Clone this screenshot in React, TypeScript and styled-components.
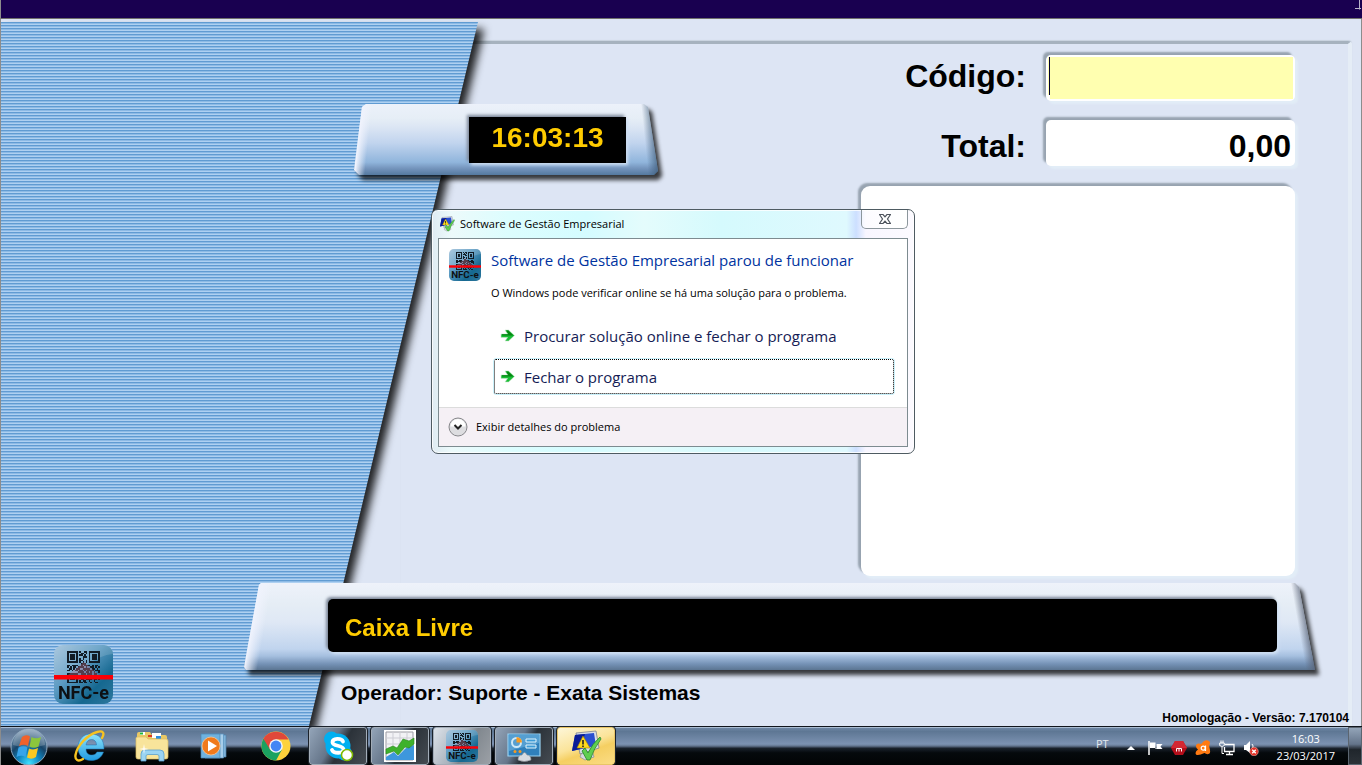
import React from 'react';
import styled, { createGlobalStyle } from 'styled-components';

const GlobalStyle = createGlobalStyle`
  *, *::before, *::after { box-sizing: border-box; }
  body { margin: 0; background: #dde5f4; }
  button, input { font: inherit; color: inherit; margin: 0; }
`;

const pos = `"Liberation Sans", Arial, sans-serif`;
const ui = `"Segoe UI", "Open Sans", sans-serif`;

const Screen = styled.div`
  min-height: 100vh;
  display: flex;
  flex-direction: column;
  font-family: ${pos};
  color: #000;
`;

const TopBar = styled.header`
  height: 19px;
  background: #190050;
  border-left: 1px solid #8c8c8c;
  border-bottom: 1px solid #70706c;
  display: flex;
  justify-content: flex-end;
`;

const Stage = styled.main`
  flex: 1;
  position: relative;
  display: grid;
  background: #dde5f4;
  border: 1px solid #8c8c8c;
  border-width: 0 1px;
`;

const Frame = styled.div`
  grid-area: 1 / 1;
  margin: 22px 9px 0 400px;
  border-top: 3px solid #a6b2be;
  border-right: 4px solid #e5edf6;
  border-top-right-radius: 4px;
  box-shadow: 0 -1px 1px #c8d2de;
`;

const PanelShadow = styled.div`
  grid-area: 1 / 1;
  display: flex;
  padding-top: 3px;
  filter: drop-shadow(6px 7px 4px rgba(0, 0, 0, 0.85));
  clip-path: inset(0);
`;

const Panel = styled.aside`
  width: 477px;
  display: flex;
  align-items: flex-end;
  padding: 0 0 22px 53px;
  clip-path: polygon(0 0, 100% 0, 308px 100%, 0 100%);
  background: linear-gradient(180deg, #609bd2 0 1px, #8dbae5 1px 2px, #aed0f1 2px 3px) 0 0 / 100% 3px;
`;

const Content = styled.div`
  grid-area: 1 / 1;
  display: flex;
  flex-direction: column;
  z-index: 1;
`;

const Upper = styled.div`
  flex: 1;
  display: flex;
  justify-content: space-between;
  padding: 36px 66px 0 353px;
`;

const PlateShadow = styled.div<{ $kind: 'clock' | 'status' }>`
  filter: drop-shadow(4px 5px 2px rgba(0, 0, 0, 0.75));
  margin: ${p => (p.$kind === 'clock' ? '49px 0 0' : '7px 46px 0 243px')};
`;

const ClockPlate = styled.div`
  padding: 13px 32px 12px 115px;
  clip-path: polygon(8px 3px, 12px 0, calc(100% - 14px) 0, calc(100% - 10px) 3px, 100% calc(100% - 4px), calc(100% - 4px) 100%, 5px 100%, 0 calc(100% - 5px));
  background:
    linear-gradient(96deg, #f0f3fd 8px, rgba(240, 243, 253, 0) 18px),
    linear-gradient(264deg, rgba(60, 90, 120, 0.6) 8px, rgba(120, 140, 170, 0) 17px),
    linear-gradient(180deg, #ecf1fa 0, #e6eef6 20%, #dce6f4 32%, #c1d4ee 55%, #90b5dc 82%, #7393bb 91%, #54799f 100%);
`;

const StatusPlate = styled.div`
  padding: 16px 38px 18px 84px;
  clip-path: polygon(15px 2px, 17px 0, calc(100% - 20px) 0, calc(100% - 16px) 4px, 100% 100%, 2px 100%, 0 calc(100% - 3px));
  background:
    linear-gradient(100deg, #f0f3fd 15px, rgba(240, 243, 253, 0) 28px),
    linear-gradient(260deg, rgba(90, 100, 120, 0.75) 15px, rgba(120, 140, 170, 0) 24px),
    linear-gradient(180deg, #eef2fa 0, #e5edf5 25%, #dfe8f5 45%, #c0d4ee 76%, #a5bfdf 84%, #7592b6 93%, #5b7592 100%);
`;

const Display = styled.output<{ $size: number; $round?: boolean }>`
  display: flex;
  align-items: center;
  justify-content: ${p => (p.$round ? 'flex-start' : 'center')};
  min-width: 157px;
  height: ${p => (p.$round ? 53 : 46)}px;
  padding: ${p => (p.$round ? '4px 17px 0' : '0 0 4px')};
  border-radius: ${p => (p.$round ? 5 : 0)}px;
  background: #000;
  color: #ffcc00;
  font-weight: bold;
  font-size: ${p => p.$size}px;
  box-shadow: -2px -2px 3px #7c8798, 2px 2px 3px #d3e3f6;
`;

const Fields = styled.section`
  width: 434px;
  display: flex;
  flex-direction: column;
  gap: 19px;
`;

const Field = styled.div<{ $align: string }>`
  display: flex;
  justify-content: flex-end;
  align-items: ${p => p.$align};
  gap: 20px;
`;

const Label = styled.label`
  font-size: 32px;
  font-weight: bold;
  line-height: 42px;
`;

const sunken = `
  background: #fff;
  box-shadow: -3px -3px 2px #97a3b0, 3px 3px 2px #e2edf7;
`;

const Box = styled.div`
  ${sunken}
  width: 249px;
  height: 46px;
  padding: 2px;
  display: flex;
  border-radius: 5px;
`;

const Entry = styled.input<{ $active?: boolean }>`
  flex: 1;
  min-width: 0;
  border: 0;
  outline: 0;
  padding: ${p => (p.$active ? '0 4px' : '6px 2px 0')};
  text-align: ${p => (p.$active ? 'left' : 'right')};
  font-size: 32px;
  font-weight: bold;
  background: ${p => (p.$active ? '#ffffb0' : '#fff')};
`;

const Caret = styled.span`
  width: 1px;
  height: 38px;
  margin-left: 1px;
  background: #000030;
  box-shadow: -1px 0 #ffffb0;
`;

const List = styled.div`
  ${sunken}
  flex: 1;
  min-height: 300px;
  border-radius: 9px;
`;

const Footer = styled.footer`
  height: 56px;
  display: flex;
  justify-content: space-between;
  align-items: flex-start;
  padding: 10px 12px 0 340px;
`;

const Operator = styled.p`
  margin: 0;
  font-size: 21px;
  line-height: 26px;
  font-weight: bold;
`;

const Version = styled.p`
  margin: 0;
  align-self: flex-end;
  font-size: 12px;
  line-height: 16px;
  font-weight: bold;
`;

/* ---- crash dialog ---- */

const Dialog = styled.section`
  position: absolute;
  z-index: 2;
  left: 430px;
  top: 190px;
  width: 484px;
  padding: 0 6px 6px;
  border: 1px solid #4e5b62;
  border-radius: 7px;
  background: linear-gradient(90deg, #dfebf2 0, #ecfafb 4%, #dcfdfe 16%, #d4fcff 32%, #e4fcfc 44%, #d5fafd 60%, #dff9fe 86%, #ccdfff 88%, #f8f6ff 90%, #fcfaff 100%);
  box-shadow: inset 0 0 0 1px rgba(255, 255, 255, 0.8);
  font-family: ${ui};
`;

const TitleBar = styled.div`
  height: 28px;
  display: flex;
  align-items: flex-start;
  gap: 5px;
  padding-left: 1px;
`;

const Title = styled.h1`
  flex: 1;
  margin: 0;
  font-size: 11px;
  font-weight: normal;
  line-height: 28px;
`;

const Close = styled.button`
  width: 47px;
  height: 19px;
  display: grid;
  place-items: center;
  padding: 0;
  border: 1px solid #8c969c;
  border-top: 0;
  border-radius: 0 0 5px 5px;
  background: linear-gradient(90deg, rgba(255, 255, 255, 0.5), #fff);
`;

const Sheet = styled.div`
  border: 1px solid #7d8b90;
  background: #fff;
`;

const Message = styled.div`
  display: grid;
  grid-template-columns: 32px 1fr;
  column-gap: 10px;
  padding: 10px 12px 12px 10px;
`;

const Heading = styled.h2`
  margin: 0;
  color: #0033a0;
  font-size: 15px;
  font-weight: normal;
  line-height: 22px;
`;

const Note = styled.p`
  margin: 14px 0 16px;
  font-size: 11px;
  line-height: 16px;
`;

const Commands = styled.div`
  display: grid;
  gap: 4px;
  padding-left: 2px;
`;

const Command = styled.button<{ $focused?: boolean }>`
  height: 37px;
  display: flex;
  align-items: center;
  gap: 9px;
  padding: 0 6px;
  border: 1px solid ${p => (p.$focused ? '#c9f1fb' : 'transparent')};
  border-radius: 3px;
  outline: ${p => (p.$focused ? '1px dotted #000' : 'none')};
  outline-offset: -2px;
  background: #fff;
  color: #151c55;
  font-size: 15px;
  text-align: left;
`;

const Details = styled.div`
  border-top: 1px solid #dcdcdc;
  background: #f5f0f5;
  padding: 8px 9px 9px;
`;

const DetailsButton = styled.button`
  display: flex;
  align-items: center;
  gap: 8px;
  height: 21px;
  padding: 0;
  border: 0;
  background: none;
  font-size: 11px;
`;

/* ---- task bar ---- */

const TaskBar = styled.nav`
  height: 39px;
  display: flex;
  justify-content: space-between;
  border-top: 1px solid #10151c;
  border-left: 1px solid #8c8c8c;
  box-shadow: inset 0 1px #a9bcd2;
  background: linear-gradient(180deg, #7089a8 0, #5e7794 12%, #7c92b2 45%, #62758f 50%, #1a222c 56%, #05090c 68%, #020405 100%);
  font-family: ${ui};
  color: #fff;
`;

const Apps = styled.div`
  display: flex;
  gap: 4px;
`;

const tone: Record<string, string> = {
  none: 'none',
  open: 'linear-gradient(120deg, #93a4b8 0, #66768a 40%, #2b3239 56%, #454b52 100%)',
  lit: 'linear-gradient(120deg, #dde3ea 0, #a9b2bc 45%, #80878e 58%, #9ba0a6 100%)',
  alert: 'linear-gradient(160deg, #fdf6d8 0, #fbe49a 45%, #f5cf62 62%, #fbdc85 100%)',
};

const AppButton = styled.button<{ $tone?: string }>`
  width: 58px;
  height: 38px;
  display: grid;
  place-items: center;
  padding: 0;
  border: 1px solid ${p => (p.$tone ? (p.$tone === 'alert' ? '#e8c567' : '#a3adb8') : 'transparent')};
  border-radius: 3px;
  background: ${p => tone[p.$tone ?? 'none']};
  outline: ${p => (p.$tone ? '1px solid #1b222b' : 'none')};
`;

const Start = styled(AppButton)`
  width: 56px;
`;

const Tray = styled.div`
  display: flex;
  align-items: center;
  gap: 8px;
  font-size: 11px;
`;

const Lang = styled.span`
  margin-right: 6px;
  padding-bottom: 5px;
  color: #e4e8ee;
`;

const TrayButton = styled.button`
  width: 16px;
  height: 38px;
  display: grid;
  place-items: center;
  padding: 3px 0 0;
  border: 0;
  background: none;
`;

const Clock = styled.time`
  margin: 0 5px 0 10px;
  padding-top: 1px;
  line-height: 17px;
  text-align: center;
`;

const ShowDesktop = styled.button`
  width: 14px;
  height: 38px;
  padding: 0;
  border: 1px solid #5b6570;
  background: linear-gradient(180deg, #93a4b8 0, #64748a 45%, #20262c 60%, #2c3238 100%);
`;

/* ---- drawings ---- */

const qr = [
  '111111101001101111111',
  '100000100110101000001',
  '101110101101001011101',
  '101110100011101011101',
  '101110101010001011101',
  '100000101100101000001',
  '111111101010101111111',
  '000000000111000000000',
  '110111100101111010110',
  '101011011110100110101',
  '011010110011111011010',
  '110101101101011110111',
  '000000011110110101001',
  '111111100111011101100',
  '100000101101110011010',
  '101110101011101011000',
  '101110100110111101101',
  '100000101011001001000',
  '111111101101100100110',
];

function NfcIcon({ size }: { size: number }) {
  const id = `nfc${size}`;
  return (
    <svg width={size} height={size} viewBox="0 0 59 59" role="img" aria-label="NFC-e">
      <defs>
        <linearGradient id={id} x1="0" y1="0" x2="1" y2="1">
          <stop offset="0" stopColor="#9dbfd9" />
          <stop offset=".4" stopColor="#5b9ac2" />
          <stop offset=".72" stopColor="#156890" />
          <stop offset="1" stopColor="#2f789e" />
        </linearGradient>
      </defs>
      <rect width="59" height="59" rx="9" fill={`url(#${id})`} />
      <path d="M0 34Q22 31 34 20Q46 10 59 9V9Q59 0 50 0H9Q0 0 0 9Z" fill="#fff" opacity=".14" />
      <g fill="#111c26" shapeRendering="crispEdges">
        {qr.map((row, y) =>
          row.split('').map((c, x) =>
            c === '1' ? (
              <rect key={`${x}-${y}`} x={13 + x * 1.56} y={6 + y * 1.7} width="1.65" height="1.75" />
            ) : null,
          ),
        )}
      </g>
      <path d="M14 30L30 17L45 30Z" fill="#c2768c" opacity=".38" />
      <rect y="30" width="59" height="4.5" fill="#fb0007" />
      <text x="29.500" y="54" textAnchor="middle" fontFamily="Roboto, sans-serif" fontWeight="bold" fontSize="18" fill="#0d1013">
        NFC-e
      </text>
    </svg>
  );
}

function ProgramIcon({ size }: { size: number }) {
  return (
    <svg width={size} height={size} viewBox="0 0 32 32" aria-hidden="true">
      <path d="M12 22l10-2 2 7-9 3-5-3z" fill="#d5d8de" stroke="#8b9099" strokeWidth=".7" />
      <path d="M6 3L26 1L29 18L10 24Z" fill="#d9dde6" stroke="#7c828e" strokeWidth=".8" />
      <path d="M5 5L24 3L26 16L2 21Z" fill="#2a4fd0" />
      <path d="M5 5L15 4L10 19L2 21Z" fill="#0a1c96" />
      <path d="M13 6L20 18H7Z" fill="#ffd91c" stroke="#a78300" strokeWidth=".6" />
      <path d="M13 10V14.500M13 15.600V17" stroke="#222" strokeWidth="1.600" />
      <path d="M12 21L15 18L18 23Q22 14 30 7L31 9Q24 18 20 30H17Z" fill="#5fce50" stroke="#23852a" strokeWidth=".8" />
    </svg>
  );
}

function Arrow() {
  return (
    <svg width="15" height="15" viewBox="0 0 15 15" aria-hidden="true">
      <path d="M1 6H7.500L5 2H8.500L14.500 7.500L8.500 13H5L7.500 9.500H1Z" fill="#17bd33" stroke="#cfe6d0" strokeWidth=".6" />
      <path d="M2 6.200H8.500L6.200 2.600H8.200L13.500 7.500H2Z" fill="#078414" />
    </svg>
  );
}

function Chevron() {
  return (
    <svg width="20" height="20" viewBox="0 0 20 20" aria-hidden="true">
      <circle cx="10" cy="10" r="9" fill="#dddde0" stroke="#87878b" />
      <path d="M2.500 9.500a7.500 7.500 0 0 1 15 0z" fill="#fff" />
      <path d="M6.500 8L10 11.500L13.500 8" fill="none" stroke="#222" strokeWidth="2" />
    </svg>
  );
}

function StartOrb() {
  return (
    <svg width="38" height="38" viewBox="0 0 38 38" aria-hidden="true">
      <defs>
        <radialGradient id="orb" cx=".5" cy=".95" r=".9">
          <stop offset="0" stopColor="#3fe0ff" />
          <stop offset=".35" stopColor="#0f83bd" />
          <stop offset=".62" stopColor="#174569" />
          <stop offset="1" stopColor="#7f99b3" />
        </radialGradient>
      </defs>
      <circle cx="19" cy="19" r="18" fill="url(#orb)" stroke="#8fa9bf" />
      <path d="M3 17A16 16 0 0 1 35 17Q19 22 3 17Z" fill="#fff" opacity=".2" />
      <path d="M12 9Q16 6 20 8.500L18 18Q14 15.500 9 18Z" fill="#f0622b" />
      <path d="M21.500 9Q26 11.500 31 9L28.500 18.500Q24 21 19.500 18.500Z" fill="#8cc63c" />
      <path d="M8.500 19.500Q13.500 17 17.500 19.500L15.500 29Q11.500 26.500 6.500 29Z" fill="#36a4ea" />
      <path d="M19 20.500Q23.500 22.500 28 20L26 29Q21.500 32 17 29.500Z" fill="#fcc920" />
    </svg>
  );
}

function ExplorerE() {
  return (
    <svg width="32" height="34" viewBox="0 0 32 34" aria-hidden="true">
      <defs>
        <linearGradient id="ie" x1="0" y1="0" x2="0" y2="1">
          <stop offset="0" stopColor="#8fe3fb" />
          <stop offset="1" stopColor="#1f9be0" />
        </linearGradient>
      </defs>
      <path fillRule="evenodd" fill="url(#ie)" stroke="#1a76b8" strokeWidth=".5" d="M17 5C25 5 30 10 30 20H12C12 24 14.500 26 18 26C20.500 26 22 25 23 23H29.500C27.500 29 23 31.500 17 31.500C9 31.500 4 26 4 18.500C4 11 9 5 17 5ZM12 16H22.500C22.500 12.500 20.500 10.500 17.500 10.500C14.500 10.500 12.500 12.500 12 16Z" />
      <path d="M28 9C31 4 29 1 23 3C13 6 3 17 1.500 26C.8 31 4 33 9 30" fill="none" stroke="#f7c321" strokeWidth="2.400" strokeLinecap="round" />
    </svg>
  );
}

function FolderIcon() {
  return (
    <svg width="34" height="32" viewBox="0 0 34 32" aria-hidden="true">
      <path d="M2 4Q2 2 4 2H15L17 5H30Q32 5 32 7V28H2Z" fill="#e8c865" />
      <path d="M5 2h5v3H5zM17 3h9v5h-9z" fill="#fff" />
      <path d="M5 2.500h3v2H5z" fill="#20b83a" />
      <path d="M13 5h4v2h-4z" fill="#dd3b24" />
      <path d="M21 6h5v3h-5z" fill="#2c8fe0" />
      <path d="M1 8Q1 7 3 7H11L13 9H31Q33 9 33 11V27Q33 29 31 29H3Q1 29 1 27Z" fill="#f8e49b" stroke="#dcbd62" strokeWidth=".7" />
      <path d="M6 31V24Q6 20 10 20H25Q29 20 29 24V31H24V26Q24 24.500 22 24.500H13Q11 24.500 11 26V31Z" fill="#9bd4f2" stroke="#5b9fce" strokeWidth=".8" />
      <path d="M9 14l.8 4.200L14 19l-4.200.8L9 24l-.8-4.200L4 19l4.200-.8z" fill="#fff" opacity=".9" />
    </svg>
  );
}

function PlayerIcon() {
  return (
    <svg width="28" height="28" viewBox="0 0 28 28" aria-hidden="true">
      <path d="M8 3H26V25H8Z" fill="#7fb2d9" stroke="#4d83ae" strokeWidth=".7" />
      <path d="M5 2H23.500V26H5Z" fill="#a6cdea" stroke="#5690bd" strokeWidth=".7" />
      <path d="M1 2H20V26H1Z" fill="#6fb2df" stroke="#4886b5" strokeWidth=".7" />
      <circle cx="11" cy="14" r="9" fill="#f07a1b" stroke="#f9c796" strokeWidth=".8" />
      <path d="M8 8.500L17 14L8 19.500Z" fill="#fff" />
    </svg>
  );
}

function ChromeIcon() {
  return (
    <svg width="30" height="30" viewBox="0 0 30 30" aria-hidden="true">
      <circle cx="15" cy="15" r="14.500" fill="#fdd23c" />
      <path d="M15 15L2.400 7.800A14.500 14.500 0 0 0 15 29.500L21 18.500Z" fill="#1aa260" />
      <path d="M2.400 7.800A14.500 14.500 0 0 1 27.600 8.500H15L9 18.500Z" fill="#e0483a" />
      <circle cx="15" cy="15" r="6.800" fill="#f4f7fa" />
      <circle cx="15" cy="15" r="5.400" fill="#4285f4" />
    </svg>
  );
}

function SkypeIcon() {
  return (
    <svg width="32" height="32" viewBox="0 0 32 32" aria-hidden="true">
      <circle cx="16" cy="16" r="12.500" fill="#00aff0" />
      <circle cx="9.500" cy="9" r="7.500" fill="#00aff0" />
      <circle cx="22.500" cy="23" r="7.500" fill="#00aff0" />
      <path d="M21 11.500C19.500 8 10.500 8 10.500 12.200C10.500 17 21.500 14.500 21.500 19.500C21.500 24 11.500 23.500 10 20" fill="none" stroke="#fff" strokeWidth="3.800" strokeLinecap="round" />
      <circle cx="25" cy="25" r="5.500" fill="#fff" stroke="#7fba00" strokeWidth="1.500" />
    </svg>
  );
}

function ChartIcon() {
  return (
    <svg width="32" height="32" viewBox="0 0 32 32" aria-hidden="true">
      <path d="M0 0H32V32H0Z" fill="#fff" />
      <path d="M2 2H29V30H2Z" fill="#f2f2f5" stroke="#9a9aa2" />
      <path d="M2 8H29M2 14H29M2 20H29M9 2V30M16 2V30M23 2V30" stroke="#cdcdd4" />
      <path d="M2 27L10 22L14 26L22 18L30 15V30H2Z" fill="#3d97dc" />
      <path d="M2 19L9 16L13 18L19 9L25 11L30 8V14L25 18L21 17L14 25L10 21L2 24Z" fill="#3eb12c" stroke="#25861a" strokeWidth=".6" />
    </svg>
  );
}

function ControlIcon() {
  return (
    <svg width="34" height="32" viewBox="0 0 34 32" aria-hidden="true">
      <path d="M1 4H33V26H1Z" fill="#2f80bb" stroke="#9ad2f2" strokeWidth="1.200" />
      <path d="M2 5H32V13L2 21Z" fill="#6fb4df" opacity=".6" />
      <circle cx="9.500" cy="12.500" r="4.500" fill="none" stroke="#cfe9f8" strokeWidth="2" />
      <path d="M9.500 12.500V7A5.500 5.500 0 0 1 15 12.500Z" fill="#f59a22" />
      <path d="M19 9H29V12H19ZM19 15H29V18H19Z" fill="#3d9bd6" stroke="#e0f3fc" />
      <circle cx="8" cy="21.500" r="1.500" fill="#f59a22" />
      <circle cx="13" cy="21.500" r="1.500" fill="#f59a22" />
      <path d="M11 30Q11 25 15 25Q16 22.500 17.500 22.500Q19 22.500 20 25Q24 25 24 30Q17 33 11 30Z" fill="#d7dbe0" stroke="#888e96" strokeWidth=".6" />
    </svg>
  );
}

function FlagIcon() {
  return (
    <svg width="16" height="16" viewBox="0 0 16 16" aria-hidden="true">
      <path d="M2 1V15" stroke="#fff" strokeWidth="1.500" />
      <path d="M3 2.500H8.500V8H3Z" fill="#fff" />
      <path d="M9.500 4H15.500L13.500 6.500L15.500 9H8V8.500H9.500Z" fill="#fff" />
    </svg>
  );
}

function MIcon() {
  return (
    <svg width="16" height="16" viewBox="0 0 16 16" aria-hidden="true">
      <path d="M4 1H12L16 8L12 15H4L0 8Z" fill="#b30f1b" />
      <path d="M4 1H12L16 8H0Z" fill="#d32833" />
      <path d="M5.500 11.500V8.500H8V11.500M8 8.500H10.500V11.500" fill="none" stroke="#fff" />
    </svg>
  );
}

function AvastIcon() {
  return (
    <svg width="16" height="16" viewBox="0 0 16 16" aria-hidden="true">
      <path d="M9 1Q13 -1 15 2Q15 4 14 6Q16 12 14.500 13.500Q12 15 9.500 13Q3 16 1 14.500Q-.500 12 3 9.500Q0 7 1.500 4.500Q3 3 6 4Z" fill="#ff7a12" />
      <circle cx="8.200" cy="8.200" r="2" fill="none" stroke="#fff" strokeWidth="1.200" />
      <path d="M10.500 5.500V11" stroke="#fff" strokeWidth="1.200" />
    </svg>
  );
}

function NetworkIcon() {
  return (
    <svg width="16" height="16" viewBox="0 0 16 16" fill="none" stroke="#fff" aria-hidden="true">
      <path d="M6 4.500H15V11.500H5.500V7M10.500 12V14.500M7 14.500H14" strokeWidth="1.300" />
      <path d="M.700 3H5.300V5.500Q3 7.500 .700 5.500ZM2 .500V3M4 .500V3M3 7V13.500H5" />
    </svg>
  );
}

function SpeakerIcon() {
  return (
    <svg width="16" height="16" viewBox="0 0 16 16" aria-hidden="true">
      <path d="M1 5H3L7 1V13L3 10H1Z" fill="#fff" />
      <path d="M9 4Q11 6 9.500 8" fill="none" stroke="#fff" />
      <circle cx="11" cy="11.500" r="4.300" fill="#e23127" stroke="#f5c4c0" strokeWidth=".5" />
      <path d="M9.200 9.700L12.800 13.300M12.800 9.700L9.200 13.300" stroke="#fff" strokeWidth="1.400" />
    </svg>
  );
}

const apps: { name: string; tone?: string; icon: React.ReactNode }[] = [
  { name: 'Internet Explorer', icon: <ExplorerE /> },
  { name: 'Windows Explorer', icon: <FolderIcon /> },
  { name: 'Media Player', icon: <PlayerIcon /> },
  { name: 'Chrome', icon: <ChromeIcon /> },
  { name: 'Skype', tone: 'open', icon: <SkypeIcon /> },
  { name: 'Monitor', tone: 'open', icon: <ChartIcon /> },
  { name: 'NFC-e', tone: 'lit', icon: <NfcIcon size={32} /> },
  { name: 'Painel de Controle', tone: 'open', icon: <ControlIcon /> },
  { name: 'Software de Gestão Empresarial', tone: 'alert', icon: <ProgramIcon size={32} /> },
];

const trayItems: { name: string; icon: React.ReactNode }[] = [
  { name: 'Central de Ações', icon: <FlagIcon /> },
  { name: 'Monitor', icon: <MIcon /> },
  { name: 'Avast', icon: <AvastIcon /> },
  { name: 'Rede', icon: <NetworkIcon /> },
  { name: 'Volume', icon: <SpeakerIcon /> },
];

export default function App() {
  return (
    <Screen>
      <GlobalStyle />
      <TopBar>
        <svg width="8" height="10" viewBox="0 0 8 10" aria-hidden="true">
          <path d="M5.500 0V9.500M1 8.500H7" stroke="#b9b4c9" fill="none" />
        </svg>
      </TopBar>
      <Stage>
        <Frame />
        <PanelShadow>
          <Panel>
            <NfcIcon size={59} />
          </Panel>
        </PanelShadow>
        <Content>
          <Upper>
            <PlateShadow $kind="clock">
              <ClockPlate>
                <Display $size={28}>16:03:13</Display>
              </ClockPlate>
            </PlateShadow>
            <Fields>
              <Field $align="flex-start">
                <Label htmlFor="codigo">Código:</Label>
                <Box>
                  <Caret />
                  <Entry id="codigo" $active defaultValue="" />
                </Box>
              </Field>
              <Field $align="baseline">
                <Label htmlFor="total">Total:</Label>
                <Box>
                  <Entry id="total" readOnly value="0,00" />
                </Box>
              </Field>
              <List />
            </Fields>
          </Upper>
          <PlateShadow $kind="status">
            <StatusPlate>
              <Display $size={24} $round>Caixa Livre</Display>
            </StatusPlate>
          </PlateShadow>
          <Footer>
            <Operator>Operador: Suporte - Exata Sistemas</Operator>
            <Version>Homologação - Versão: 7.170104</Version>
          </Footer>
        </Content>
        <Dialog role="dialog" aria-labelledby="dialog-title">
          <TitleBar>
            <svg width="16" height="28" aria-hidden="true">
              <g transform="translate(0 6)">
                <ProgramIcon size={16} />
              </g>
            </svg>
            <Title id="dialog-title">Software de Gestão Empresarial</Title>
            <Close aria-label="Fechar">
              <svg width="12" height="10" viewBox="0 0 12 10" aria-hidden="true">
                <path d="M.5 .5H4L6 2.800L8 .5H11.500L8.500 5L11.500 9.500H8L6 7.200L4 9.500H.5L3.500 5Z" fill="#fff" stroke="#4c525c" strokeWidth="1.200" />
              </svg>
            </Close>
          </TitleBar>
          <Sheet>
            <Message>
              <NfcIcon size={32} />
              <div>
                <Heading>Software de Gestão Empresarial parou de funcionar</Heading>
                <Note>O Windows pode verificar online se há uma solução para o problema.</Note>
                <Commands>
                  <Command>
                    <Arrow />
                    Procurar solução online e fechar o programa
                  </Command>
                  <Command $focused>
                    <Arrow />
                    Fechar o programa
                  </Command>
                </Commands>
              </div>
            </Message>
            <Details>
              <DetailsButton>
                <Chevron />
                Exibir detalhes do problema
              </DetailsButton>
            </Details>
          </Sheet>
        </Dialog>
      </Stage>
      <TaskBar>
        <Apps>
          <Start aria-label="Iniciar">
            <StartOrb />
          </Start>
          {apps.map(a => (
            <AppButton key={a.name} $tone={a.tone} aria-label={a.name}>
              {a.icon}
            </AppButton>
          ))}
        </Apps>
        <Tray>
          <Lang>PT</Lang>
          <TrayButton aria-label="Mostrar ícones ocultos">
            <svg width="8" height="4" viewBox="0 0 8 4" aria-hidden="true">
              <path d="M4 0L8 4H0Z" fill="#fff" />
            </svg>
          </TrayButton>
          {trayItems.map(t => (
            <TrayButton key={t.name} aria-label={t.name}>
              {t.icon}
            </TrayButton>
          ))}
          <Clock>
            16:03
            <br />
            23/03/2017
          </Clock>
          <ShowDesktop aria-label="Mostrar área de trabalho" />
        </Tray>
      </TaskBar>
    </Screen>
  );
}
